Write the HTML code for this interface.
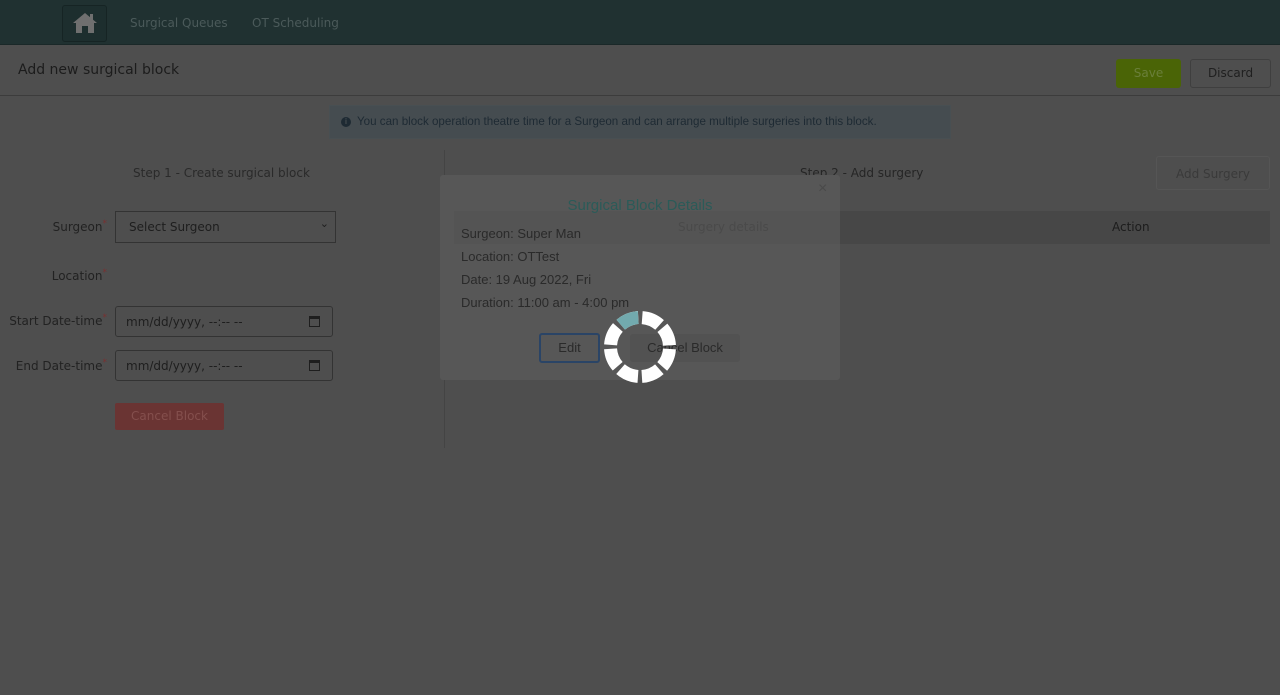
<!DOCTYPE html>
<html><head><meta charset="utf-8"><style>
*{box-sizing:border-box;margin:0;padding:0}
body{width:1280px;height:695px;background:#4e4e4e;font-family:"Liberation Sans",sans-serif;position:relative;overflow:hidden;color:#1f1f1f}
.abs{position:absolute}
.os{font-family:"DejaVu Sans","Liberation Sans",sans-serif;font-size:12px}
</style></head><body>
<div class="abs" style="left:0;top:0;width:1280px;height:45px;background:#203131;border-bottom:1px solid #1a2828"></div>
<div class="abs" style="left:62px;top:5px;width:45px;height:37px;background:#1d2e2e;border:1px solid #162424;border-radius:3px"></div>
<svg class="abs" style="left:72px;top:11px" width="26" height="24" viewBox="0 0 26 24"><path d="M13 2 L1 12 L4 12 L4 22 L10 22 L10 15 L16 15 L16 22 L22 22 L22 12 L25 12 Z" fill="#6f6f6f"/><rect x="18" y="3" width="3" height="6" fill="#6f6f6f"/></svg>
<div class="abs os" style="left:130px;top:16px;color:#4b5a5a">Surgical Queues</div>
<div class="abs os" style="left:252px;top:16px;color:#4b5a5a">OT Scheduling</div>
<div class="abs" style="left:0;top:46px;width:1280px;height:50px;border-bottom:1px solid #3c3c3c"></div>
<div class="abs os" style="left:18px;top:62px;font-size:14px;color:#1c1c1c">Add new surgical block</div>
<div class="abs os" style="left:1116px;top:59px;width:65px;height:29px;background:#4a6406;border-radius:3px;color:#6a7f3a;text-align:center;line-height:28px">Save</div>
<div class="abs os" style="left:1190px;top:59px;width:81px;height:29px;border:1px solid #3f3f3f;border-radius:3px;color:#1f1f1f;text-align:center;line-height:27px">Discard</div>
<div class="abs" style="left:329px;top:105px;width:622px;height:34px;background:#454c50;border:1px solid #484f52"></div>
<div class="abs" style="left:341px;top:117px;width:10px;height:10px;border-radius:50%;background:#1e2a33;color:#454c50;font-size:8px;font-weight:bold;text-align:center;line-height:10px">i</div>
<div class="abs" style="left:357px;top:115px;font-size:11.6px;color:#1e2a33">You can block operation theatre time for a Surgeon and can arrange multiple surgeries into this block.</div>
<div class="abs" style="left:444px;top:150px;width:1px;height:298px;background:#444"></div>
<div class="abs os" style="left:133px;top:166px;color:#2a2a2a">Step 1 - Create surgical block</div>
<div class="abs os" style="right:1173px;top:219px;color:#222;white-space:nowrap">Surgeon<sup style="color:#7a3030;font-size:9px">*</sup></div>
<div class="abs os" style="right:1173px;top:268px;color:#222;white-space:nowrap">Location<sup style="color:#7a3030;font-size:9px">*</sup></div>
<div class="abs os" style="right:1173px;top:313px;color:#222;white-space:nowrap">Start Date-time<sup style="color:#7a3030;font-size:9px">*</sup></div>
<div class="abs os" style="right:1173px;top:358px;color:#222;white-space:nowrap">End Date-time<sup style="color:#7a3030;font-size:9px">*</sup></div>
<div class="abs os" style="left:115px;top:211px;width:221px;height:32px;border:1px solid #333;color:#1e1e1e;padding:8px 13px">Select Surgeon<span style="position:absolute;right:6px;top:5px;font-size:11px">&#8964;</span></div>
<div class="abs os" style="left:115px;top:306px;width:218px;height:31px;border:1px solid #333;border-radius:3px;color:#1e1e1e;padding:8px 10px">mm/dd/yyyy, --:-- --<span style="position:absolute;right:12px;top:9px;width:11px;height:11px;border:1.5px solid #1e1e1e;border-top-width:3px"></span></div>
<div class="abs os" style="left:115px;top:350px;width:218px;height:31px;border:1px solid #333;border-radius:3px;color:#1e1e1e;padding:8px 10px">mm/dd/yyyy, --:-- --<span style="position:absolute;right:12px;top:9px;width:11px;height:11px;border:1.5px solid #1e1e1e;border-top-width:3px"></span></div>
<div class="abs os" style="left:115px;top:403px;width:109px;height:27px;background:#6a3433;border-radius:2px;color:#844f4d;text-align:center;line-height:26px">Cancel Block</div>
<div class="abs os" style="left:800px;top:166px;color:#252525">Step 2 - Add surgery</div>
<div class="abs os" style="left:1156px;top:156px;width:114px;height:34px;border:1px solid #555;border-radius:3px;color:#3a3a3a;text-align:center;line-height:34px">Add Surgery</div>
<div class="abs" style="left:455px;top:211px;width:815px;height:33px;background:#474747"></div>
<div class="abs os" style="left:1112px;top:220px;color:#1c1c1c">Action</div>
<div class="abs" style="left:440px;top:175px;width:400px;height:205px;background:#575757;border-radius:3px"></div>
<div class="abs" style="left:454px;top:211px;width:386px;height:33px;background:#545454"></div>
<div class="abs os" style="left:678px;top:220px;color:#4a4a4a">Surgery details</div>
<div class="abs" style="left:818px;top:180px;font-size:16px;color:#4a4a4a">×</div>
<div class="abs" style="left:440px;top:197px;width:400px;text-align:center;font-size:15px;color:#2b5b58">Surgical Block Details</div>
<div class="abs" style="left:461px;top:222px;font-size:13px;color:#2a2a2a;line-height:23px">Surgeon: Super Man<br>Location: OTTest<br>Date: 19 Aug 2022, Fri<br>Duration: 11:00 am - 4:00 pm</div>
<div class="abs" style="left:539px;top:333px;width:61px;height:30px;border:2px solid #2a4466;border-radius:3px;font-size:13px;color:#2a2a2a;text-align:center;line-height:26px">Edit</div>
<div class="abs" style="left:630px;top:334px;width:110px;height:28px;background:#525252;border-radius:3px;font-size:13px;color:#2a2a2a;text-align:center;line-height:28px">Cancel Block</div>
<svg class="abs" style="left:602px;top:309px" width="76" height="76" viewBox="0 0 76 76">
<circle cx="38" cy="38" r="29.5" fill="none" stroke="#ffffff" stroke-width="13" stroke-dasharray="19.17 4" stroke-dashoffset="-2"/>
<circle cx="38" cy="38" r="29.5" fill="none" stroke="#72aaae" stroke-width="13" stroke-dasharray="19.17 166.18" stroke-dashoffset="-117.8"/>
</svg>
</body></html>
